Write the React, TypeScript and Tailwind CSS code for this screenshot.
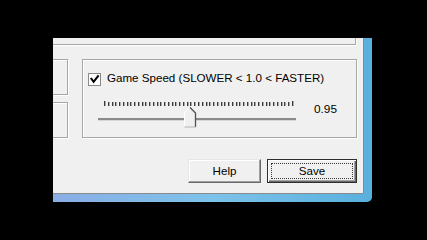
import React from 'react';

const font = "font-['Liberation_Sans',Arial,sans-serif]";

const SpeedSlider: React.FC<{ value: number }> = ({ value }) => {
  // 0.5 .. 1.5, step 0.02 -> 51 ticks
  const ticks = Array.from({ length: 51 }, (_, i) => i);
  const thumbX = 7 + ((value - 0.5) / 1.0) * 188 + 0.5;
  const l = Math.round(thumbX - 5.5) + 0.5;
  const r = Math.round(thumbX + 5.5) + 0.5;
  const c = (l + r) / 2;
  return (
    <svg width="200" height="28" viewBox="0 0 200 28" className="block">
      {ticks.map(i => {
        const x = Math.round(7 + i * 3.76);
        const edge = i === 0 || i === 50;
        return <rect key={i} x={x} y={edge ? 1 : 2} width="1.4" height={edge ? 5 : 4} fill="#3c3c3c" />;
      })}
      <rect x="1" y="18" width="198" height="2" fill="#8a8a8a" />
      <rect x="1" y="20" width="198" height="1" fill="#d6d6d6" />
      <polygon points={`${l},27 ${l},13 ${c},7.5 ${r},13 ${r},27`} fill="#f0f0f0" />
      <polyline points={`${l},27 ${l},13 ${c},7.5`} fill="none" stroke="#ffffff" strokeWidth="1" />
      <polyline points={`${c},7.5 ${r},13 ${r},27`} fill="none" stroke="#505050" strokeWidth="1.3" />
      <line x1={l} y1="27" x2={r} y2="27" stroke="#b0b0b0" strokeWidth="1" />
    </svg>
  );
};

export default function App() {
  return (
    <div className={`w-[427px] h-[240px] bg-black pt-[38px] pl-[53px] overflow-hidden ${font}`}>
      <div className="w-[319px] h-[164px] rounded-br-[5px] bg-gradient-to-r from-[#8aaee6] via-[#7cc2ea] to-[#58b0de]">
        <div className="w-[311px] h-[156px] bg-[#f0f0f0] border-r border-b border-[#8a8a8a] flex flex-col">
          <div className="h-[7px] w-[303px] border-r border-b border-[#a6a6a6] shadow-[1px_1px_0_#fff]" />

          <div className="mt-[14px] flex gap-[14px]">
            <div className="w-[15px] flex flex-col gap-[7px]">
              <div className="h-[36px] border-t border-r border-b border-[#a6a6a6] shadow-[inset_0_1px_0_#fff,1px_1px_0_#fff]" />
              <div className="h-[36px] border-t border-r border-b border-[#a6a6a6] shadow-[inset_0_1px_0_#fff,1px_1px_0_#fff]" />
            </div>

            <div className="w-[275px] h-[79px] border border-[#a6a6a6] shadow-[inset_1px_1px_0_#fff,1px_1px_0_#fff] pt-[11px] pl-[5px]">
              <div className="flex items-start h-[15px]">
                <div className="mt-[2px] w-[13px] h-[13px] border border-[#8a8a8a] bg-white flex items-center justify-center">
                  <svg width="11" height="11" viewBox="0 0 11 11">
                    <polyline points="1.8,4 4.6,7.8 9.6,1.4" fill="none" stroke="#000" strokeWidth="2.1" />
                  </svg>
                </div>
                <span className="ml-[6px] text-[11.6px] leading-[13px] text-black whitespace-nowrap">
                  Game Speed (SLOWER &lt; 1.0 &lt; FASTER)
                </span>
              </div>
              <div className="mt-[14px] ml-[9px] flex items-start">
                <SpeedSlider value={0.95} />
                <span className="ml-[17px] mt-[2px] text-[11.8px] leading-[14px] text-black">0.95</span>
              </div>
            </div>
          </div>

          <div className="mt-[21px] flex justify-end gap-[6px] pr-[6px]">
            <button className="w-[73px] h-[24px] bg-[#f0f0f0] border border-t-[#e6e6e6] border-l-[#e6e6e6] border-r-[#696969] border-b-[#696969] shadow-[inset_-1px_-1px_0_#a0a0a0,inset_1px_1px_0_#fff] text-[11.6px] text-black flex items-center justify-center">
              Help
            </button>
            <button className="w-[90px] h-[24px] bg-[#f0f0f0] border border-[#2e2e2e] shadow-[inset_1px_1px_0_#fff,inset_-1px_-1px_0_#696969,inset_-2px_-2px_0_#a0a0a0] p-[3px] flex">
              <span className="flex-1 border border-dotted border-[#3a3a3a] text-[11.6px] leading-[14px] text-black flex items-center justify-center">
                Save
              </span>
            </button>
          </div>
        </div>
      </div>
    </div>
  );
}
